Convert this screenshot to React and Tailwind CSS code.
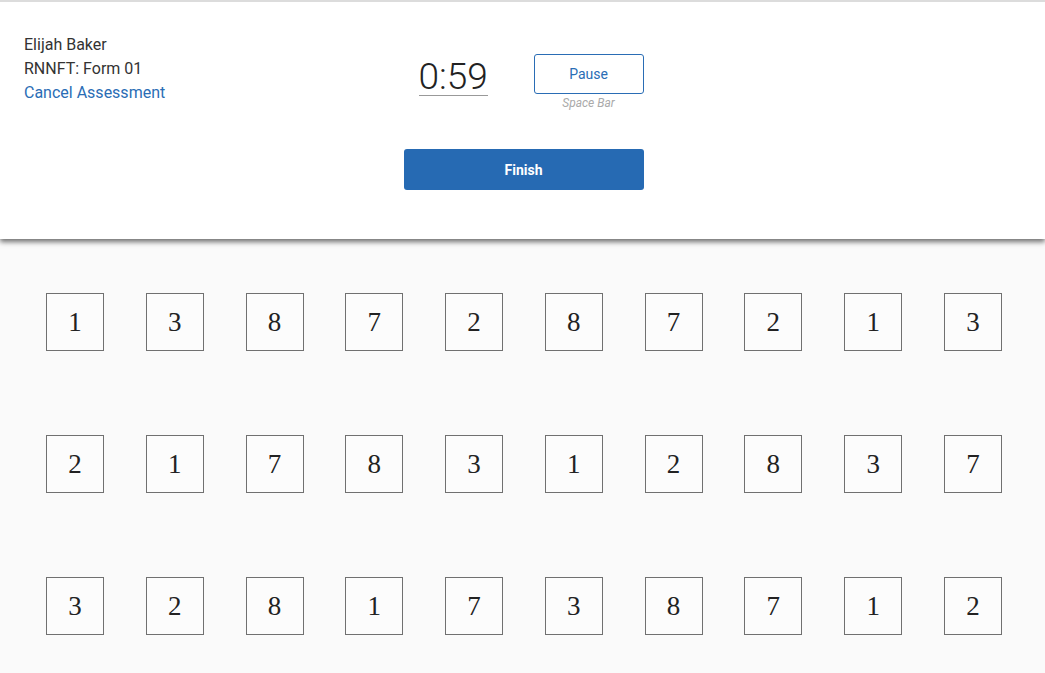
import React from "react";

const rows = [
  [1, 3, 8, 7, 2, 8, 7, 2, 1, 3],
  [2, 1, 7, 8, 3, 1, 2, 8, 3, 7],
  [3, 2, 8, 1, 7, 3, 8, 7, 1, 2],
];

export default function App() {
  return (
    <div className="min-h-screen bg-[#fafafa] font-['Roboto',sans-serif]">
      {/* Header */}
      <div className="relative z-10 bg-white border-t-2 border-[#dcdcdc] shadow-[0_3px_5px_rgba(0,0,0,0.55)] grid grid-cols-[1fr_240px_1fr] pt-[31px] pb-[49px]">
        <div className="pl-6 text-base leading-6 text-[#333]">
          <div>Elijah Baker</div>
          <div>RNNFT: Form 01</div>
          <a href="#" className="text-[#2a6db5]">
            Cancel Assessment
          </a>
        </div>

        <div className="pt-[21px] pl-px">
          <div className="grid grid-cols-[110px_110px] gap-5">
            <div className="flex items-start pl-[15px]">
              <span className="mt-[5px] text-[37px] leading-[36px] font-light text-[#222] border-b border-[#999]">
                0:59
              </span>
            </div>
            <div className="flex flex-col items-center">
              <button className="w-[110px] h-10 border border-[#2a6db5] rounded-[3px] text-sm text-[#2a6db5] bg-white">
                Pause
              </button>
              <span className="mt-[2px] text-xs leading-[14px] italic text-[#aaa]">
                Space Bar
              </span>
            </div>
          </div>

          <button className="mt-[39px] w-[240px] h-[41px] rounded-[3px] bg-[#266ab3] text-white text-sm font-bold">
            Finish
          </button>
        </div>

        <div />
      </div>

      {/* Number grid */}
      <div className="pt-[54px] pl-[46px] pr-[43px] flex flex-col gap-[84px]">
        {rows.map((row, i) => (
          <div key={i} className="flex justify-between">
            {row.map((n, j) => (
              <div
                key={j}
                className="w-[58px] h-[58px] border border-[#707070] bg-[#fcfcfc] flex items-center justify-center text-[27px] text-[#222] font-['Liberation_Serif',serif]"
              >
                {n}
              </div>
            ))}
          </div>
        ))}
      </div>
    </div>
  );
}
